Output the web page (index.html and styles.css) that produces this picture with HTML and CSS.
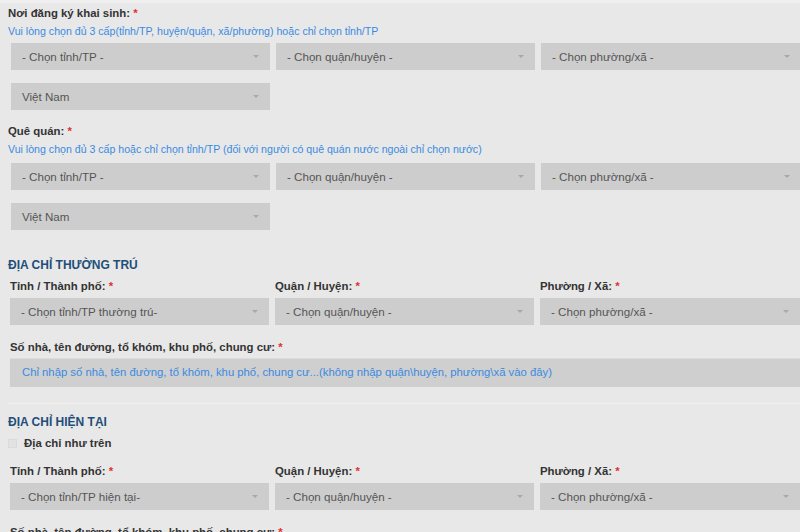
FILE: index.html
```html
<!DOCTYPE html>
<html lang="vi">
<head>
<meta charset="utf-8">
<link rel="stylesheet" href="styles.css">
</head>
<body>
<div class="page">
  <div class="block">
    <div class="label">Nơi đăng ký khai sinh: <span class="req">*</span></div>
    <div class="hint">Vui lòng chọn đủ 3 cấp(tỉnh/TP, huyện/quận, xã/phường) hoặc chỉ chọn tỉnh/TP</div>
    <div class="row">
      <div class="select">- Chọn tỉnh/TP -</div>
      <div class="select">- Chọn quận/huyện -</div>
      <div class="select">- Chọn phường/xã -</div>
    </div>
    <div class="row row2">
      <div class="select">Việt Nam</div>
    </div>
  </div>

  <div class="block b2">
    <div class="label">Quê quán: <span class="req">*</span></div>
    <div class="hint">Vui lòng chọn đủ 3 cấp hoặc chỉ chọn tỉnh/TP (đối với người có quê quán nước ngoài chỉ chọn nước)</div>
    <div class="row">
      <div class="select">- Chọn tỉnh/TP -</div>
      <div class="select">- Chọn quận/huyện -</div>
      <div class="select">- Chọn phường/xã -</div>
    </div>
    <div class="row row2">
      <div class="select">Việt Nam</div>
    </div>
  </div>

  <div class="section s1">
    <div class="heading">ĐỊA CHỈ THƯỜNG TRÚ</div>
    <div class="grid">
      <div class="field">
        <div class="label">Tỉnh / Thành phố: <span class="req">*</span></div>
        <div class="select">- Chọn tỉnh/TP thường trú-</div>
      </div>
      <div class="field">
        <div class="label">Quận / Huyện: <span class="req">*</span></div>
        <div class="select">- Chọn quận/huyện -</div>
      </div>
      <div class="field">
        <div class="label">Phường / Xã: <span class="req">*</span></div>
        <div class="select">- Chọn phường/xã -</div>
      </div>
    </div>
    <div class="label addr">Số nhà, tên đường, tổ khóm, khu phố, chung cư: <span class="req">*</span></div>
    <div class="input">Chỉ nhập số nhà, tên đường, tổ khóm, khu phố, chung cư...(không nhập quận\huyện, phường\xã vào đây)</div>
  </div>

  <div class="section s2">
    <div class="heading">ĐỊA CHỈ HIỆN TẠI</div>
    <label class="check"><span class="box"></span>Địa chỉ như trên</label>
    <div class="grid">
      <div class="field">
        <div class="label">Tỉnh / Thành phố: <span class="req">*</span></div>
        <div class="select">- Chọn tỉnh/TP hiện tại-</div>
      </div>
      <div class="field">
        <div class="label">Quận / Huyện: <span class="req">*</span></div>
        <div class="select">- Chọn quận/huyện -</div>
      </div>
      <div class="field">
        <div class="label">Phường / Xã: <span class="req">*</span></div>
        <div class="select">- Chọn phường/xã -</div>
      </div>
    </div>
    <div class="label addr">Số nhà, tên đường, tổ khóm, khu phố, chung cư: <span class="req">*</span></div>
  </div>
</div>
</body>
</html>
```

FILE: styles.css
```css
* { box-sizing: border-box; }
html, body {
  margin: 0;
  padding: 0;
  background: #e8e8e8;
  font-family: "Liberation Sans", Arial, sans-serif;
  overflow: hidden;
}
.page {
  width: 800px;
  height: 532px;
  overflow: hidden;
  border-top: 3px solid #efefef;
  padding-left: 8px;
}
.label {
  font-size: 11.4px;
  font-weight: bold;
  color: #333;
  line-height: 16px;
}
.req { color: #e03030; }
.block { padding-top: 2px; }
.hint {
  font-size: 10.6px;
  color: #3a8be0;
  line-height: 14px;
  margin-top: 3px;
}
.row {
  display: grid;
  grid-template-columns: 259px 259px 260px;
  column-gap: 6px;
  margin-top: 5px;
  padding-left: 3px;
}
.block .row2 { margin-top: 13px; }
.b2 { margin-top: 11px; }
.b2 .row { margin-top: 7px; }
.b2 .row2 { margin-top: 13px; }
.select {
  position: relative;
  height: 27px;
  background: #cdcdcd;
  color: #555;
  font-size: 11.6px;
  line-height: 27px;
  padding-left: 11px;
  white-space: nowrap;
}
.select::after {
  content: "";
  position: absolute;
  right: 11px;
  top: 12px;
  border-left: 3px solid transparent;
  border-right: 3px solid transparent;
  border-top: 3px solid #a8a8a8;
}
.section { margin-top: 27px; }
.heading {
  font-size: 12px;
  font-weight: bold;
  color: #1f4e79;
  line-height: 16px;
}
.grid {
  display: grid;
  grid-template-columns: 259px 259px 260px;
  column-gap: 6px;
  margin-top: 5px;
  padding-left: 2px;
}
.grid .select { margin-top: 4px; }
.addr { margin-top: 14px; padding-left: 2px; }
.input {
  margin-top: 3px;
  margin-left: 2px;
  height: 29px;
  background: #cfcfcf;
  border-top: 1px solid #dcdcdc;
  color: #3a8be0;
  font-size: 11.3px;
  line-height: 27px;
  padding-left: 12px;
  white-space: nowrap;
}
.s2 {
  margin-top: 16px;
  border-top: 1px solid #f0f0f0;
  padding-top: 10px;
}
.check {
  display: flex;
  align-items: center;
  font-size: 11.4px;
  font-weight: bold;
  color: #333;
  line-height: 16px;
  margin-top: 5px;
}
.box {
  width: 9px;
  height: 9px;
  background: #e2e2e2;
  border: 1px solid #dadada;
  margin-right: 7px;
}
.s2 .grid { margin-top: 12px; }
```
